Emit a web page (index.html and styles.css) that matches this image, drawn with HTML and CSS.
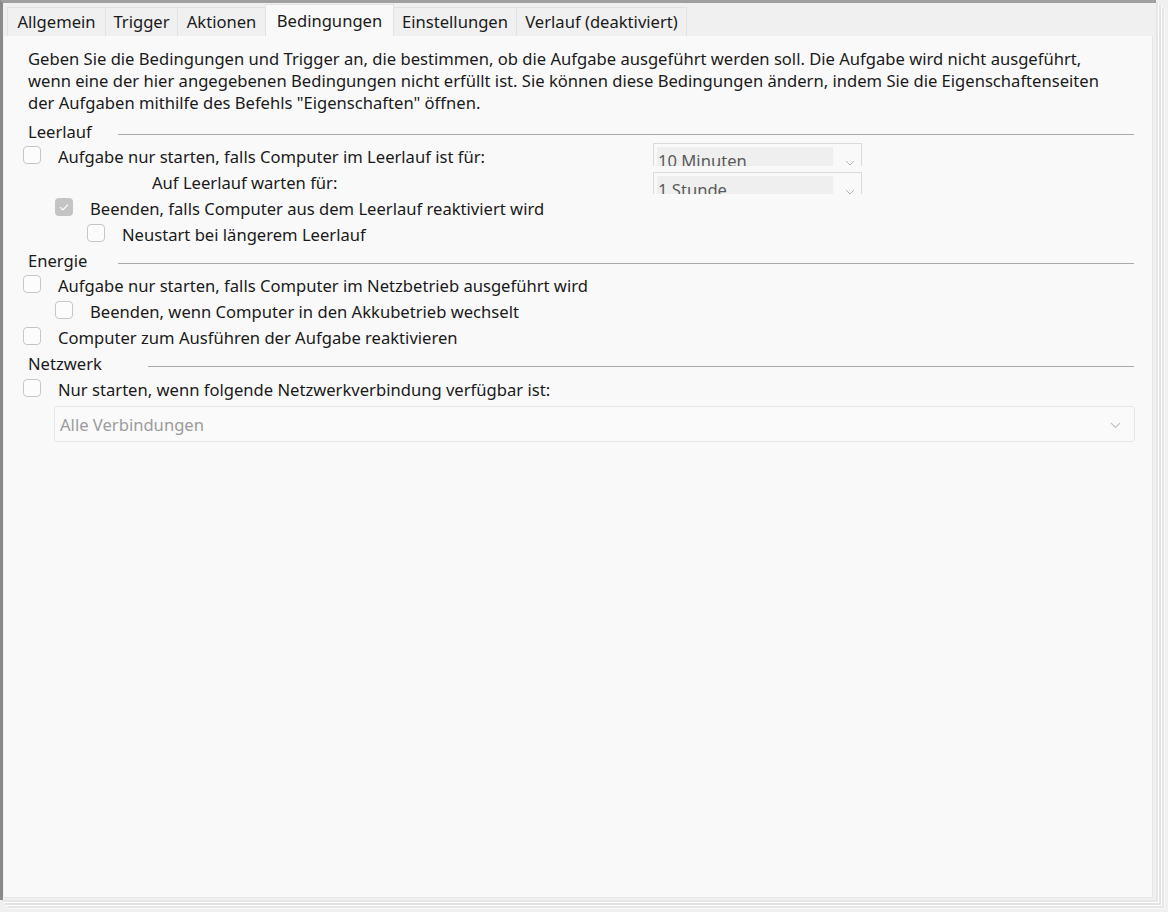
FILE: index.html
```html
<!DOCTYPE html>
<html lang="de">
<head>
<meta charset="utf-8">
<title>Bedingungen</title>
<link rel="stylesheet" href="styles.css">
</head>
<body>
<div class="frame">
  <div class="tabs">
    <div class="tab t-allg">Allgemein</div>
    <div class="tab t-trig">Trigger</div>
    <div class="tab t-akt">Aktionen</div>
    <div class="tab t-bed active">Bedingungen</div>
    <div class="tab t-ein">Einstellungen</div>
    <div class="tab t-ver">Verlauf (deaktiviert)</div>
  </div>
  <div class="panel">
    <p class="intro">Geben Sie die Bedingungen und Trigger an, die bestimmen, ob die Aufgabe ausgeführt werden soll. Die Aufgabe wird nicht ausgeführt,<br>wenn eine der hier angegebenen Bedingungen nicht erfüllt ist. Sie können diese Bedingungen ändern, indem Sie die Eigenschaftenseiten<br>der Aufgaben mithilfe des Befehls "Eigenschaften" öffnen.</p>

    <div class="group g-leer"><span class="gtitle">Leerlauf</span><span class="gline"></span></div>
    <div class="row">
      <div class="left">
        <span class="cb"></span><span class="lbl">Aufgabe nur starten, falls Computer im Leerlauf ist für:</span>
      </div>
      <div class="combo c1">
        <div class="fill"><span class="ctext">10 Minuten</span></div>
        <svg class="chev" width="10" height="6" viewBox="0 0 10 6"><path d="M1 1 L5 5 L9 1" fill="none" stroke="#b4b4b4" stroke-width="1"/></svg>
      </div>
    </div>
    <div class="row">
      <div class="left indent-wait">
        <span class="lbl">Auf Leerlauf warten für:</span>
      </div>
      <div class="combo c2">
        <div class="fill"><span class="ctext">1 Stunde</span></div>
        <svg class="chev" width="10" height="6" viewBox="0 0 10 6"><path d="M1 1 L5 5 L9 1" fill="none" stroke="#b4b4b4" stroke-width="1"/></svg>
      </div>
    </div>
    <div class="row l1">
      <span class="cb checked"><svg width="18" height="18" viewBox="0 0 18 18"><path d="M5 9.2 L7.8 12 L13 6.6" fill="none" stroke="#ffffff" stroke-width="1.1"/></svg></span><span class="lbl">Beenden, falls Computer aus dem Leerlauf reaktiviert wird</span>
    </div>
    <div class="row l2">
      <span class="cb"></span><span class="lbl">Neustart bei längerem Leerlauf</span>
    </div>

    <div class="group g-en"><span class="gtitle">Energie</span><span class="gline"></span></div>
    <div class="row">
      <span class="cb"></span><span class="lbl">Aufgabe nur starten, falls Computer im Netzbetrieb ausgeführt wird</span>
    </div>
    <div class="row l1">
      <span class="cb"></span><span class="lbl">Beenden, wenn Computer in den Akkubetrieb wechselt</span>
    </div>
    <div class="row">
      <span class="cb"></span><span class="lbl">Computer zum Ausführen der Aufgabe reaktivieren</span>
    </div>

    <div class="group g-net"><span class="gtitle wide">Netzwerk</span><span class="gline"></span></div>
    <div class="row r-net">
      <span class="cb"></span><span class="lbl">Nur starten, wenn folgende Netzwerkverbindung verfügbar ist:</span>
    </div>
    <div class="netselect">
      <span class="ntext">Alle Verbindungen</span>
      <svg class="nchev" width="11" height="7" viewBox="0 0 11 7"><path d="M1 1 L5.5 5.5 L10 1" fill="none" stroke="#c4c4c4" stroke-width="1.1"/></svg>
    </div>
  </div>
</div>
</body>
</html>
```
FILE: styles.css
```css
html, body {
  margin: 0;
  padding: 0;
}
body {
  width: 1168px;
  height: 912px;
  overflow: hidden;
  background: #f0f0f0;
  font-family: "Noto Sans", "DejaVu Sans", sans-serif;
  font-size: 16.6px;
  color: #1a1a1a;
}
.frame {
  width: 1153px;
  height: 897px;
  border-top: 3px solid #a0a0a0;
  border-left: 3px solid #8a8a8a;
  background: #f0f0f0;
  display: flex;
  flex-direction: column;
  box-shadow: 2px 2px 0 #e6e6e6, 3px 3px 0 #ffffff, 5px 5px 0 #e3e3e3, 6px 6px 0 #ffffff, 8px 8px 0 #e6e6e6, 9px 9px 0 #fafafa;
}
.tabs {
  height: 33px;
  display: flex;
  align-items: flex-end;
  padding-left: 4px;
  flex: none;
}
.tab {
  height: 29px;
  line-height: 28px;
  text-align: center;
  box-sizing: border-box;
  border: 1px solid #e2e2e2;
  border-bottom: none;
  margin-right: -1px;
  background: #f0f0f0;
  white-space: nowrap;
}
.tab.active {
  height: 32px;
  padding-top: 2px;
  background: #f9f9f9;
  position: relative;
  z-index: 1;
}
.t-allg { width: 99px; }
.t-trig { width: 73px; }
.t-akt { width: 89px; }
.t-bed { width: 129px; }
.t-ein { width: 124px; }
.t-ver { width: 171px; }

.panel {
  flex: 1;
  margin: 0 0 2px 1px;
  width: 1149px;
  box-sizing: border-box;
  background: #f9f9f9;
  border-right: 1px solid #e6e6e6;
  border-bottom: 1px solid #e6e6e6;
  padding: 12px 0 0 19px;
}
.intro {
  margin: 0 0 5px 5px;
  line-height: 22px;
  white-space: nowrap;
}
.group {
  height: 25px;
  line-height: 25px;
  display: flex;
  margin-right: 18px;
  padding-left: 5px;
}
.gtitle {
  width: 90px;
  flex: none;
}
.gtitle.wide {
  width: 120px;
}
.gline {
  flex: 1;
  height: 1px;
  margin-top: 15px;
  background: #a9a9a9;
}
.row {
  height: 26px;
  line-height: 26px;
  display: flex;
  align-items: flex-start;
  white-space: nowrap;
}
.row.l1 { padding-left: 32px; }
.row.l2 { padding-left: 64px; }
.row.r-net { margin-top: 1px; }
.left {
  width: 630px;
  display: flex;
  align-items: flex-start;
  flex: none;
}
.indent-wait {
  padding-left: 129px;
  box-sizing: border-box;
}
.cb {
  width: 18px;
  height: 18px;
  box-sizing: border-box;
  border: 1px solid #c6c6c6;
  border-radius: 4px;
  background: #fcfcfc;
  margin-top: 2px;
  margin-right: 17px;
  flex: none;
  display: block;
}
.cb.checked {
  border: none;
  background: #c4c4c4;
}
.cb svg {
  display: block;
}
.combo {
  width: 209px;
  box-sizing: border-box;
  border: 1px solid #dadada;
  border-bottom: none;
  background: #f9f9f9;
  overflow: hidden;
  display: flex;
  padding: 3px 0 0 3px;
  flex: none;
}
.combo.c1 {
  height: 23px;
  margin-top: -1px;
}
.combo.c2 {
  height: 22px;
  margin-top: 2px;
}
.fill {
  width: 176px;
  height: 30px;
  background: #efefef;
  line-height: 24px;
  padding: 2px 0 0 1px;
  box-sizing: border-box;
  color: #5a5a5a;
}
.chev {
  margin: 13px 0 0 12px;
}
.c2 .chev {
  margin-top: 13px;
}
.netselect {
  margin: 3px 0 0 31px;
  width: 1081px;
  height: 36px;
  box-sizing: border-box;
  border: 1px solid #e6e6e6;
  border-radius: 3px;
  background: #fafafa;
  display: flex;
  align-items: center;
  justify-content: space-between;
  padding: 0 13px 0 5px;
}
.ntext {
  color: #9c9c9c;
}
.nchev {
  margin-top: 2px;
}
```
